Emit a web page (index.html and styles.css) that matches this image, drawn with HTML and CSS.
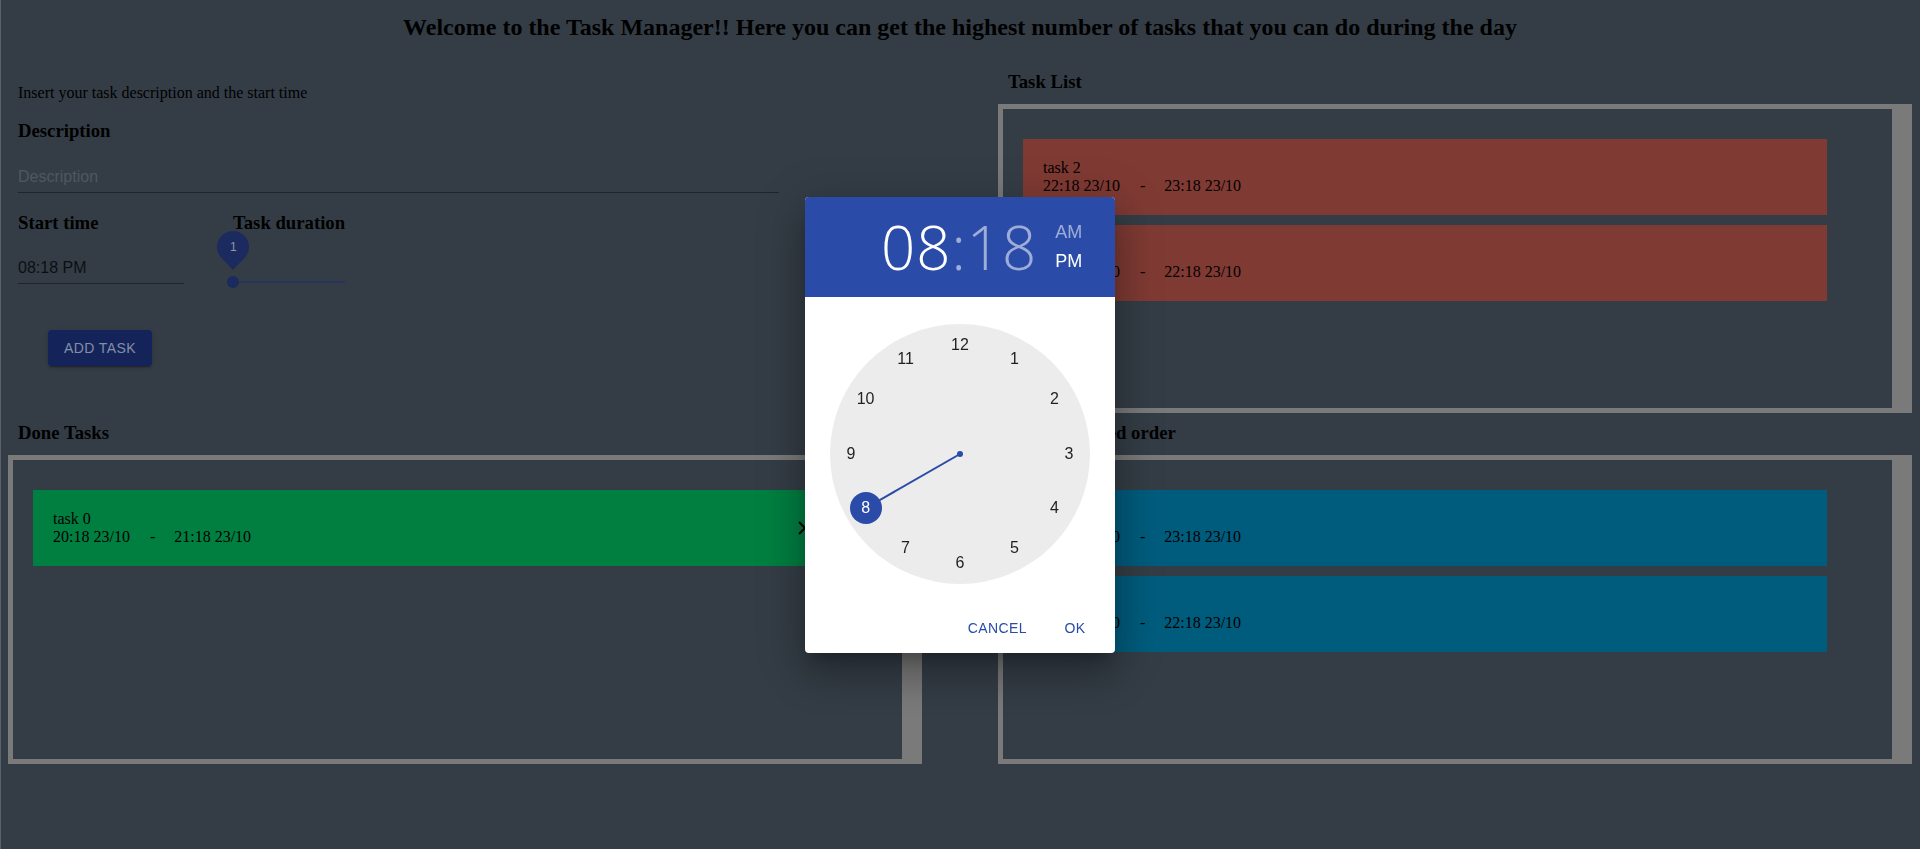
FILE: index.html
```html
<!DOCTYPE html>
<html lang="en">
<head>
<meta charset="utf-8">
<title>Task Manager</title>
<link rel="stylesheet" href="styles.css">
</head>
<body>
<h2 class="title">Welcome to the Task Manager!! Here you can get the highest number of tasks that you can do during the day</h2>
<main class="layout">
  <section class="form">
    <p class="intro">Insert your task description and the start time</p>
    <h3 class="label">Description</h3>
    <div class="field field-wide"><span class="placeholder">Description</span></div>
    <div class="row">
      <div class="col col-time">
        <h3 class="label">Start time</h3>
        <div class="field field-time"><span class="value">08:18 PM</span></div>
      </div>
      <div class="col col-duration">
        <h3 class="label">Task duration</h3>
        <div class="slider">
          <span class="rail"></span>
          <span class="thumb"></span>
          <span class="pin"><span class="pin-text">1</span></span>
        </div>
      </div>
    </div>
    <button class="add-btn">ADD TASK</button>
  </section>

  <section class="panel panel-top">
    <h3 class="panel-title">Task List</h3>
    <div class="box">
      <div class="card card-red">
        <div class="card-text">
          <div>task 2</div>
          <div><span>22:18 23/10</span><span class="dash">-</span><span>23:18 23/10</span></div>
        </div>
      </div>
      <div class="card card-red">
        <div class="card-text">
          <div>task 1</div>
          <div><span>21:18 23/10</span><span class="dash">-</span><span>22:18 23/10</span></div>
        </div>
      </div>
    </div>
  </section>

  <section class="panel">
    <h3 class="panel-title">Done Tasks</h3>
    <div class="box">
      <div class="card card-green">
        <div class="card-text">
          <div>task 0</div>
          <div><span>20:18 23/10</span><span class="dash">-</span><span>21:18 23/10</span></div>
        </div>
        <svg class="card-icon" width="14" height="14" viewBox="0 0 14 14"><path d="M1 1 L13 13 M1 13 L13 1" stroke="#000" stroke-width="2" fill="none"/></svg>
      </div>
    </div>
  </section>

  <section class="panel">
    <h3 class="panel-title">Recommended order</h3>
    <div class="box">
      <div class="card card-blue">
        <div class="card-text">
          <div>task 2</div>
          <div><span>22:18 23/10</span><span class="dash">-</span><span>23:18 23/10</span></div>
        </div>
      </div>
      <div class="card card-blue">
        <div class="card-text">
          <div>task 1</div>
          <div><span>21:18 23/10</span><span class="dash">-</span><span>22:18 23/10</span></div>
        </div>
      </div>
    </div>
  </section>
</main>

<div class="overlay">
  <div class="dialog">
    <div class="dlg-head">
      <div class="hm"><span class="hh">08</span><span class="sep">:</span><span class="mm">18</span></div>
      <div class="ampm"><span class="am">AM</span><span class="pm">PM</span></div>
    </div>
    <div class="dlg-body">
      <div class="clock">
        <svg class="hand" width="260" height="260" viewBox="0 0 260 260">
          <line x1="130" y1="130" x2="36" y2="184" stroke="#2a4ca8" stroke-width="2"/>
          <circle cx="130" cy="130" r="3" fill="#2a4ca8"/>
        </svg>
        <span class="num n12">12</span>
        <span class="num n1">1</span>
        <span class="num n2">2</span>
        <span class="num n3">3</span>
        <span class="num n4">4</span>
        <span class="num n5">5</span>
        <span class="num n6">6</span>
        <span class="num n7">7</span>
        <span class="num n8 selected">8</span>
        <span class="num n9">9</span>
        <span class="num n10">10</span>
        <span class="num n11">11</span>
      </div>
    </div>
    <div class="dlg-actions">
      <button class="dlg-btn">CANCEL</button>
      <button class="dlg-btn">OK</button>
    </div>
  </div>
</div>
</body>
</html>
```

FILE: styles.css
```css
html, body {
  margin: 0;
  padding: 0;
}
body {
  width: 1920px;
  height: 849px;
  overflow: hidden;
  background: #343d46;
  box-shadow: inset 1px 0 #59616a;
  font-family: "Liberation Serif", "Times New Roman", serif;
  color: #000;
}

.title {
  margin: 13px 0 0;
  font-size: 24px;
  line-height: 28px;
  font-weight: bold;
  text-align: center;
}

.layout {
  display: grid;
  grid-template-columns: 914px 914px;
  grid-template-rows: 372px auto;
  column-gap: 76px;
  padding-left: 8px;
}

/* ---------- form ---------- */
.form {
  padding-left: 10px;
}
.intro {
  margin: 43px 0 0;
  font-size: 16px;
  line-height: 18px;
}
.label {
  margin: 18px 0 0;
  font-size: 18.72px;
  line-height: 22px;
  font-weight: bold;
}
.field {
  margin-top: 19px;
  padding: 6px 0;
  line-height: 19px;
  font-family: "Liberation Sans", Arial, sans-serif;
  font-size: 16px;
  border-bottom: 1px solid #1f252b;
}
.field-wide {
  width: 761px;
}
.placeholder {
  color: #4f5760;
}
.row {
  display: flex;
  gap: 49px;
}
.col-time {
  width: 166px;
}
.col-time .label,
.col-duration .label {
  margin-top: 19px;
}
.field-time {
  margin-top: 18px;
}
.value {
  color: #0c0f12;
}
.col-duration {
  display: flex;
  flex-direction: column;
}
.slider {
  position: relative;
  height: 2px;
  margin-top: 47px;
}
.rail {
  display: block;
  height: 2px;
  background: #27345b;
}
.thumb {
  position: absolute;
  left: -6px;
  top: -5px;
  width: 12px;
  height: 12px;
  border-radius: 50%;
  background: #1b2a5f;
}
.pin {
  position: absolute;
  left: -16px;
  top: -50px;
  width: 32px;
  height: 32px;
  border-radius: 50% 50% 50% 0;
  background: #1b2a5f;
  transform: rotate(-45deg);
  display: flex;
  align-items: center;
  justify-content: center;
}
.pin-text {
  transform: rotate(45deg);
  font-family: "Liberation Sans", Arial, sans-serif;
  font-size: 12px;
  color: #8f98ae;
}
.add-btn {
  display: block;
  margin: 46px 0 0 30px;
  width: 104px;
  height: 36px;
  padding: 0;
  border: none;
  border-radius: 4px;
  background: #14245a;
  color: #858ea4;
  font-family: "Liberation Sans", Arial, sans-serif;
  font-size: 14px;
  letter-spacing: 0.4px;
  box-shadow: 0 3px 1px -2px rgba(0,0,0,.2), 0 2px 2px rgba(0,0,0,.14), 0 1px 5px rgba(0,0,0,.12);
}

/* ---------- panels ---------- */
.panel {
  padding-top: 9px;
}
.panel-top {
  padding-top: 30px;
}
.panel-title {
  margin: 0 0 11px 10px;
  font-size: 18.72px;
  line-height: 22px;
  font-weight: bold;
}
.box {
  box-sizing: border-box;
  height: 309px;
  border: 5px solid #7a7a7a;
  border-right-width: 20px;
  padding: 30px 0 0 20px;
  display: flex;
  flex-direction: column;
  gap: 10px;
}
.card {
  box-sizing: border-box;
  width: 804px;
  height: 76px;
  padding: 20px 25px 20px 20px;
  display: flex;
  justify-content: space-between;
  align-items: center;
  font-size: 16px;
  line-height: 18px;
}
.card-text {
  align-self: flex-start;
}
.card-red { background: #7f3a33; }
.card-green { background: #007f41; }
.card-blue { background: #005c7d; }
.dash {
  margin: 0 19px 0 20px;
}
.card-icon {
  display: block;
}

/* ---------- dialog ---------- */
.overlay {
  position: fixed;
  inset: 0;
  display: flex;
  align-items: center;
  justify-content: center;
}
.dialog {
  width: 310px;
  height: 456px;
  background: #fff;
  border-radius: 4px;
  overflow: hidden;
  display: flex;
  flex-direction: column;
  box-shadow: 0 11px 15px -7px rgba(0,0,0,.25), 0 24px 38px 3px rgba(0,0,0,.18), 0 9px 46px 8px rgba(0,0,0,.16);
  font-family: "Liberation Sans", Arial, sans-serif;
}
.dlg-head {
  height: 100px;
  flex: none;
  background: #2a4ca8;
  display: flex;
  align-items: center;
  padding-left: 76px;
}
.hm {
  font-family: "Open Sans", "Liberation Sans", sans-serif;
  font-weight: 300;
  font-size: 60px;
  line-height: 1;
  letter-spacing: 1px;
  color: #fff;
  display: flex;
}
.sep, .mm {
  color: rgba(255,255,255,0.54);
}
.ampm {
  margin-left: 18px;
  display: flex;
  flex-direction: column;
  gap: 7px;
  font-size: 18px;
  line-height: 22px;
}
.am { color: rgba(255,255,255,0.54); }
.pm { color: #fff; }
.dlg-body {
  flex: 1;
  display: flex;
  justify-content: center;
  padding-top: 27px;
}
.clock {
  position: relative;
  width: 260px;
  height: 260px;
  border-radius: 50%;
  background: #ececec;
}
.hand {
  position: absolute;
  left: 0;
  top: 0;
}
.num {
  position: absolute;
  width: 32px;
  height: 32px;
  line-height: 32px;
  text-align: center;
  font-size: 16px;
  color: rgba(0,0,0,0.87);
  border-radius: 50%;
}
.num.selected {
  background: #2a4ca8;
  color: #fff;
}
.n12 { left: 114px; top: 5px; }
.n1 { left: 168.5px; top: 19.6px; }
.n2 { left: 208.4px; top: 59.5px; }
.n3 { left: 223px; top: 114px; }
.n4 { left: 208.4px; top: 168.5px; }
.n5 { left: 168.5px; top: 208.4px; }
.n6 { left: 114px; top: 223px; }
.n7 { left: 59.5px; top: 208.4px; }
.n8 { left: 19.6px; top: 168.5px; }
.n9 { left: 5px; top: 114px; }
.n10 { left: 19.6px; top: 59.5px; }
.n11 { left: 59.5px; top: 19.6px; }
.dlg-actions {
  flex: none;
  display: flex;
  justify-content: flex-end;
  gap: 8px;
  padding: 8px 8px 7px;
}
.dlg-btn {
  min-width: 64px;
  height: 36px;
  padding: 0 8px;
  border: none;
  background: transparent;
  color: #2a4ca8;
  font-family: "Liberation Sans", Arial, sans-serif;
  font-size: 14px;
  letter-spacing: 0.4px;
}
```
